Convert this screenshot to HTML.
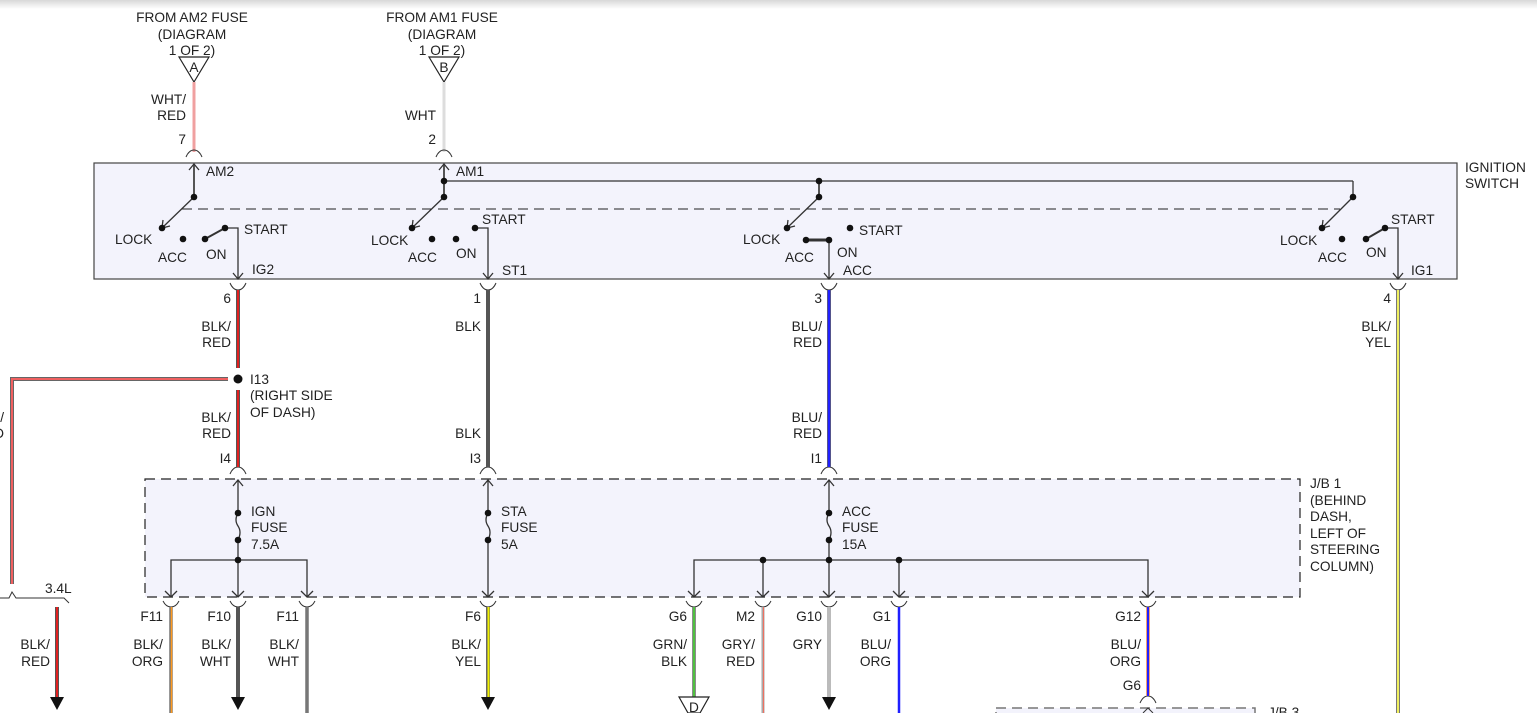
<!DOCTYPE html>
<html><head><meta charset="utf-8"><style>
html,body{margin:0;padding:0;background:#fff;}
svg{display:block;}
text{font-family:"Liberation Sans",sans-serif;font-size:13.7px;fill:#222;}
.r{text-anchor:end;}
.c{text-anchor:middle;}
</style></head><body>
<svg width="1537" height="713" viewBox="0 0 1537 713" xmlns="http://www.w3.org/2000/svg">
<defs>
<linearGradient id="tg" x1="0" y1="0" x2="0" y2="1"><stop offset="0" stop-color="#d8d8d8"/><stop offset="1" stop-color="#fff"/></linearGradient>
</defs>
<rect x="0" y="0" width="1537" height="9" fill="url(#tg)"/>

<text class="c" x="192" y="22">FROM AM2 FUSE</text>
<text class="c" x="192" y="39">(DIAGRAM</text>
<text class="c" x="192" y="55">1 OF 2)</text>
<text class="c" x="442" y="22">FROM AM1 FUSE</text>
<text class="c" x="442" y="39">(DIAGRAM</text>
<text class="c" x="442" y="55">1 OF 2)</text>
<path d="M179 57 L209 57 L194 82 Z" fill="none" stroke="#222" stroke-width="1.2"/>
<path d="M429 57 L459 57 L444 82 Z" fill="none" stroke="#222" stroke-width="1.2"/>
<text class="c" x="194" y="72">A</text>
<text class="c" x="444" y="72">B</text>
<line x1="194" y1="82" x2="194" y2="152" stroke="#f0a0a0" stroke-width="3"/>
<line x1="444" y1="82" x2="444" y2="152" stroke="#ddd" stroke-width="3"/>
<text class="r" x="186" y="104">WHT/</text><text class="r" x="186" y="120">RED</text><text class="r" x="186" y="144">7</text>
<text class="r" x="436" y="120">WHT</text><text class="r" x="436" y="144">2</text>
<g fill="none" stroke="#333" stroke-width="1">
<path d="M186 157 Q189 150 194 150 Q199 150 202 157"/>
<path d="M436 157 Q439 150 444 150 Q449 150 452 157"/>
</g>

<rect x="94" y="163" width="1363" height="116" fill="#f3f3fc" stroke="#444" stroke-width="1.2"/>
<line x1="182" y1="209" x2="1340" y2="209" stroke="#222" stroke-width="1" stroke-dasharray="10,6"/>
<g stroke="#333" stroke-width="1.3" fill="none">
<line x1="194" y1="164" x2="194" y2="197" stroke="#555" stroke-width="2"/>
<path d="M189 170 L194 164 L199 170"/>
<line x1="194" y1="197" x2="163" y2="227"/>
<path d="M163 220 L162 228 L170 226"/>
<line x1="205" y1="239" x2="225" y2="228" stroke-width="2"/>
<path d="M225 228 L238 228 L238 279"/>
<path d="M233 273 L238 279 L243 273"/>
<line x1="444" y1="164" x2="444" y2="197" stroke="#555" stroke-width="2"/>
<path d="M439 170 L444 164 L449 170"/>
<line x1="444" y1="181" x2="1353" y2="181"/>
<line x1="1353" y1="181" x2="1353" y2="197"/>
<line x1="819" y1="181" x2="819" y2="197" stroke="#555" stroke-width="2"/>
<line x1="444" y1="197" x2="413" y2="227"/>
<path d="M413 220 L412 228 L420 226"/>
<path d="M475 228 L488 228 L488 279"/>
<path d="M483 273 L488 279 L493 273"/>
<line x1="819" y1="197" x2="788" y2="227"/>
<path d="M788 220 L787 228 L795 226"/>
<line x1="806" y1="240" x2="829" y2="240" stroke-width="3"/>
<path d="M829 240 L829 279"/>
<path d="M824 273 L829 279 L834 273"/>
<line x1="1353" y1="197" x2="1323" y2="227"/>
<path d="M1323 220 L1322 228 L1330 226"/>
<line x1="1366" y1="239" x2="1385" y2="228" stroke-width="2"/>
<path d="M1385 228 L1398 228 L1398 279"/>
<path d="M1393 273 L1398 279 L1403 273"/>
</g>
<g fill="#111">
<circle cx="194" cy="197" r="3.3"/><circle cx="162" cy="228" r="3.3"/><circle cx="183" cy="239" r="3.3"/><circle cx="205" cy="239" r="3.3"/><circle cx="225" cy="228" r="3.3"/>
<circle cx="444" cy="181" r="3.3"/><circle cx="444" cy="197" r="3.3"/><circle cx="412" cy="228" r="3.3"/><circle cx="432" cy="239" r="3.3"/><circle cx="456" cy="239" r="3.3"/><circle cx="475" cy="228" r="3.3"/>
<circle cx="819" cy="181" r="3.3"/><circle cx="819" cy="197" r="3.3"/><circle cx="787" cy="228" r="3.3"/><circle cx="806" cy="240" r="3.3"/><circle cx="829" cy="240" r="3.3"/><circle cx="850" cy="228" r="3.3"/>
<circle cx="1353" cy="197" r="3.3"/><circle cx="1322" cy="228" r="3.3"/><circle cx="1342" cy="239" r="3.3"/><circle cx="1366" cy="239" r="3.3"/><circle cx="1385" cy="228" r="3.3"/>
</g>
<text x="206" y="176">AM2</text><text x="456" y="176">AM1</text>
<text x="115" y="244">LOCK</text><text x="158" y="262">ACC</text><text x="206" y="259">ON</text><text x="244" y="234">START</text><text x="252" y="274">IG2</text>
<text x="371" y="245">LOCK</text><text x="408" y="262">ACC</text><text x="456" y="258">ON</text><text x="482" y="224">START</text><text x="502" y="275">ST1</text>
<text x="743" y="244">LOCK</text><text x="785" y="262">ACC</text><text x="837" y="257">ON</text><text x="859" y="235">START</text><text x="843" y="275">ACC</text>
<text x="1280" y="245">LOCK</text><text x="1318" y="262">ACC</text><text x="1366" y="257">ON</text><text x="1391" y="224">START</text><text x="1411" y="275">IG1</text>
<text x="1465" y="172">IGNITION</text><text x="1465" y="188">SWITCH</text>

<g fill="none" stroke="#333" stroke-width="1">
<path d="M230 283 Q233 290 238 290 Q243 290 246 283"/>
<path d="M480 283 Q483 290 488 290 Q493 290 496 283"/>
<path d="M821 283 Q824 290 829 290 Q834 290 837 283"/>
<path d="M1390 283 Q1393 290 1398 290 Q1403 290 1406 283"/>
<path d="M230 474 Q233 467 238 467 Q243 467 246 474"/>
<path d="M480 474 Q483 467 488 467 Q493 467 496 474"/>
<path d="M821 474 Q824 467 829 467 Q834 467 837 474"/>
</g>
<line x1="238" y1="290" x2="238" y2="368" stroke="#555" stroke-width="4"/><line x1="238" y1="290" x2="238" y2="368" stroke="#e02020" stroke-width="2"/>
<line x1="238" y1="390" x2="238" y2="467" stroke="#555" stroke-width="4"/><line x1="238" y1="390" x2="238" y2="467" stroke="#e02020" stroke-width="2"/>
<circle cx="238" cy="379" r="4.5" fill="#111"/>
<path d="M228 379 L12 379 L12 584" fill="none" stroke="#666" stroke-width="4"/>
<path d="M228 379 L12 379 L12 584" fill="none" stroke="#f06060" stroke-width="2"/>
<line x1="488" y1="290" x2="488" y2="467" stroke="#555" stroke-width="4"/>
<line x1="829" y1="290" x2="829" y2="467" stroke="#666" stroke-width="4"/><line x1="829" y1="290" x2="829" y2="467" stroke="#2020ff" stroke-width="2.5"/>
<line x1="1398" y1="290" x2="1398" y2="713" stroke="#777" stroke-width="4"/><line x1="1398" y1="290" x2="1398" y2="713" stroke="#f0f060" stroke-width="2"/>

<text class="r" x="231" y="303">6</text><text class="r" x="231" y="331">BLK/</text><text class="r" x="231" y="347">RED</text>
<text x="250" y="384">I13</text><text x="250" y="400">(RIGHT SIDE</text><text x="250" y="417">OF DASH)</text>
<text class="r" x="231" y="422">BLK/</text><text class="r" x="231" y="438">RED</text><text class="r" x="231" y="463">I4</text>
<text class="r" x="4" y="422">/</text><text class="r" x="4" y="438">D</text>
<text class="r" x="481" y="303">1</text><text class="r" x="481" y="331">BLK</text><text class="r" x="481" y="438">BLK</text><text class="r" x="481" y="463">I3</text>
<text class="r" x="822" y="303">3</text><text class="r" x="822" y="331">BLU/</text><text class="r" x="822" y="347">RED</text><text class="r" x="822" y="422">BLU/</text><text class="r" x="822" y="438">RED</text><text class="r" x="822" y="463">I1</text>
<text class="r" x="1391" y="303">4</text><text class="r" x="1391" y="331">BLK/</text><text class="r" x="1391" y="347">YEL</text>

<path d="M0 598 L9 598 L12 592 L16 598 L64 598 L69 603" fill="none" stroke="#333" stroke-width="1"/>
<text x="45" y="593">3.4L</text>
<line x1="57" y1="607" x2="57" y2="698" stroke="#555" stroke-width="4"/><line x1="57" y1="607" x2="57" y2="698" stroke="#e02020" stroke-width="2"/>
<path d="M50 697 L64 697 L57 710 Z" fill="#111"/>
<text class="r" x="50" y="649">BLK/</text><text class="r" x="50" y="666">RED</text>

<rect x="145" y="479" width="1155" height="118" fill="#f3f3fc" stroke="#222" stroke-width="1.2" stroke-dasharray="10,6"/>
<text x="1310" y="488">J/B 1</text><text x="1310" y="505">(BEHIND</text><text x="1310" y="521">DASH,</text><text x="1310" y="538">LEFT OF</text><text x="1310" y="554">STEERING</text><text x="1310" y="571">COLUMN)</text>
<g stroke="#333" stroke-width="1.3" fill="none">
<path d="M238 480 L238 513 M238 540 L238 597 M238 513 Q234 520 238 526 Q242 532 238 540"/>
<path d="M233 486 L238 480 L243 486"/>
<path d="M171 597 L171 560 L307 560 L307 597"/>
<path d="M165 591 L171 597 L177 591 M232 591 L238 597 L244 591 M301 591 L307 597 L313 591"/>
<path d="M488 480 L488 513 M488 540 L488 597 M488 513 Q484 520 488 526 Q492 532 488 540"/>
<path d="M483 486 L488 480 L493 486 M482 591 L488 597 L494 591"/>
<path d="M829 480 L829 513 M829 540 L829 597 M829 513 Q825 520 829 526 Q833 532 829 540"/>
<path d="M824 486 L829 480 L834 486"/>
<path d="M694 597 L694 560 L1148 560 L1148 597 M763 560 L763 597 M899 560 L899 597"/>
<path d="M688 591 L694 597 L700 591 M757 591 L763 597 L769 591 M823 591 L829 597 L835 591 M893 591 L899 597 L905 591 M1142 591 L1148 597 L1154 591"/>
</g>
<g fill="#111">
<circle cx="238" cy="513" r="3.3"/><circle cx="238" cy="540" r="3.3"/><circle cx="238" cy="560" r="3.3"/>
<circle cx="488" cy="513" r="3.3"/><circle cx="488" cy="540" r="3.3"/>
<circle cx="829" cy="513" r="3.3"/><circle cx="829" cy="540" r="3.3"/><circle cx="829" cy="560" r="3.3"/><circle cx="763" cy="560" r="3.3"/><circle cx="899" cy="560" r="3.3"/>
</g>
<text x="251" y="516">IGN</text><text x="251" y="532">FUSE</text><text x="251" y="549">7.5A</text>
<text x="501" y="516">STA</text><text x="501" y="532">FUSE</text><text x="501" y="549">5A</text>
<text x="842" y="516">ACC</text><text x="842" y="532">FUSE</text><text x="842" y="549">15A</text>

<g fill="none" stroke="#333" stroke-width="1">
<path d="M163 601 Q166 607 171 607 Q176 607 179 601"/>
<path d="M230 601 Q233 607 238 607 Q243 607 246 601"/>
<path d="M299 601 Q302 607 307 607 Q312 607 315 601"/>
<path d="M480 601 Q483 607 488 607 Q493 607 496 601"/>
<path d="M686 601 Q689 607 694 607 Q699 607 702 601"/>
<path d="M755 601 Q758 607 763 607 Q768 607 771 601"/>
<path d="M821 601 Q824 607 829 607 Q834 607 837 601"/>
<path d="M891 601 Q894 607 899 607 Q904 607 907 601"/>
<path d="M1140 601 Q1143 607 1148 607 Q1153 607 1156 601"/>
<path d="M1140 703 Q1143 696 1148 696 Q1153 696 1156 703"/>
</g>
<line x1="171" y1="607" x2="171" y2="713" stroke="#777" stroke-width="3.5"/><line x1="171.5" y1="607" x2="171.5" y2="713" stroke="#ff9a20" stroke-width="1.5"/>
<line x1="238" y1="607" x2="238" y2="698" stroke="#555" stroke-width="4"/>
<path d="M231 697 L245 697 L238 710 Z" fill="#111"/>
<line x1="307" y1="607" x2="307" y2="713" stroke="#777" stroke-width="3.5"/>
<line x1="488" y1="607" x2="488" y2="698" stroke="#666" stroke-width="4"/><line x1="488.5" y1="607" x2="488.5" y2="698" stroke="#f0f000" stroke-width="2"/>
<path d="M481 697 L495 697 L488 710 Z" fill="#111"/>
<line x1="694" y1="607" x2="694" y2="697" stroke="#666" stroke-width="3.5"/><line x1="694" y1="607" x2="694" y2="697" stroke="#50c040" stroke-width="2"/>
<path d="M679 697 L709 697 L700 713 L688 713 Z" fill="#fff" stroke="#222" stroke-width="1.2"/>
<text class="c" x="694" y="712">D</text>
<line x1="763" y1="607" x2="763" y2="713" stroke="#aaa" stroke-width="3"/><line x1="763.5" y1="607" x2="763.5" y2="713" stroke="#f07060" stroke-width="1"/>
<line x1="829" y1="607" x2="829" y2="698" stroke="#bbb" stroke-width="4"/>
<path d="M822 697 L836 697 L829 710 Z" fill="#111"/>
<line x1="899" y1="607" x2="899" y2="713" stroke="#2020ff" stroke-width="2.5"/>
<line x1="1148" y1="607" x2="1148" y2="696" stroke="#f08040" stroke-width="3.5"/><line x1="1148" y1="607" x2="1148" y2="696" stroke="#2020ff" stroke-width="2"/>

<text class="r" x="163" y="621">F11</text><text class="r" x="163" y="649">BLK/</text><text class="r" x="163" y="666">ORG</text>
<text class="r" x="231" y="621">F10</text><text class="r" x="231" y="649">BLK/</text><text class="r" x="231" y="666">WHT</text>
<text class="r" x="299" y="621">F11</text><text class="r" x="299" y="649">BLK/</text><text class="r" x="299" y="666">WHT</text>
<text class="r" x="481" y="621">F6</text><text class="r" x="481" y="649">BLK/</text><text class="r" x="481" y="666">YEL</text>
<text class="r" x="687" y="621">G6</text><text class="r" x="687" y="649">GRN/</text><text class="r" x="687" y="666">BLK</text>
<text class="r" x="755" y="621">M2</text><text class="r" x="755" y="649">GRY/</text><text class="r" x="755" y="666">RED</text>
<text class="r" x="822" y="621">G10</text><text class="r" x="822" y="649">GRY</text>
<text class="r" x="891" y="621">G1</text><text class="r" x="891" y="649">BLU/</text><text class="r" x="891" y="666">ORG</text>
<text class="r" x="1141" y="621">G12</text><text class="r" x="1141" y="649">BLU/</text><text class="r" x="1141" y="666">ORG</text><text class="r" x="1141" y="690">G6</text>

<rect x="996" y="708" width="259" height="20" fill="#f3f3fc" stroke="#777" stroke-width="1.5" stroke-dasharray="10,6"/>
<path d="M1143 713 L1148 708 L1153 713" fill="none" stroke="#333" stroke-width="1"/>
<text x="1268" y="717">J/B 3</text>
</svg>
</body></html>
